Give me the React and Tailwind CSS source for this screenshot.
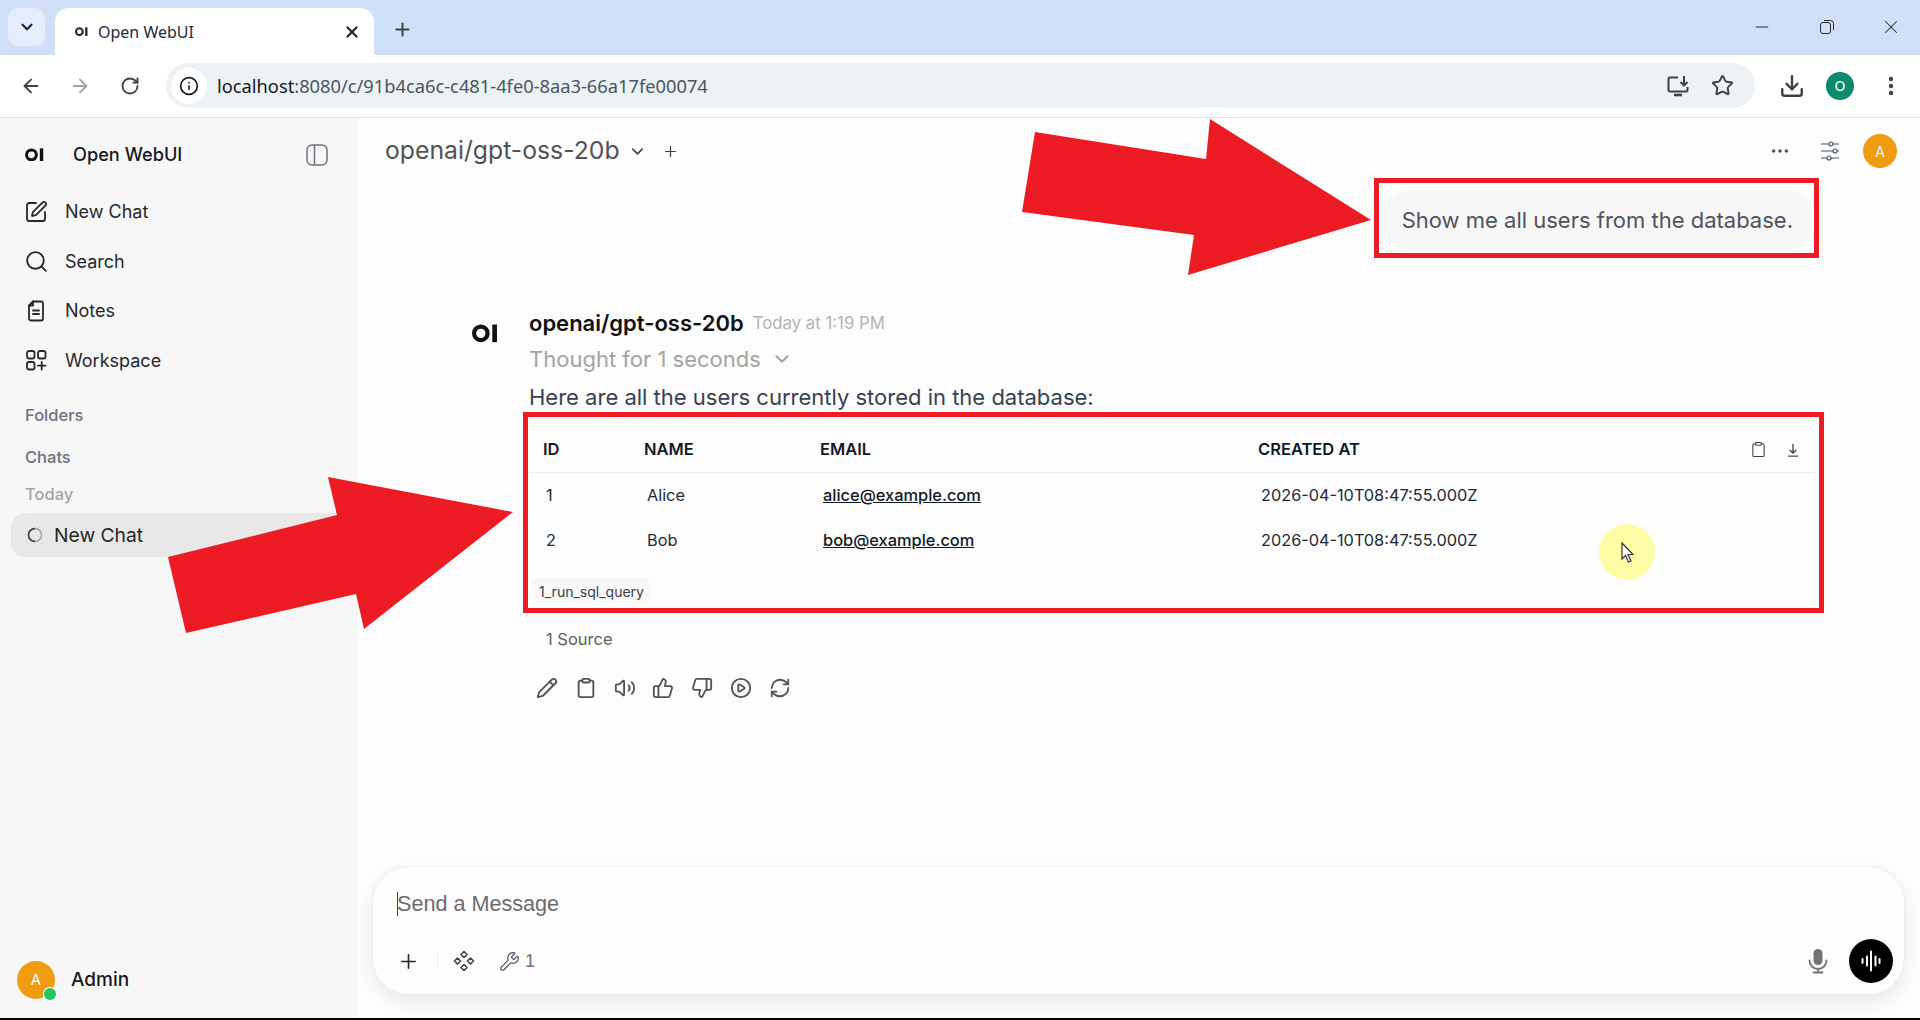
import {
  ArrowLeft,
  ArrowRight,
  RotateCw,
  Info,
  Star,
  Download,
  EllipsisVertical,
  Ellipsis,
  X,
  Plus,
  ChevronDown,
  Minus,
  SquarePen,
  Search,
  Pencil,
  Clipboard,
  Volume2,
  ThumbsUp,
  ThumbsDown,
  CirclePlay,
  RefreshCw,
  Wrench,
} from "lucide-react";

// logo: ring + bar
const Logo = ({ size = 18, className = "" }) => (
  <svg width={size} height={size * 0.72} viewBox="0 0 25 18" className={className}>
    <circle cx="8.5" cy="9" r="6.5" fill="none" stroke="currentColor" strokeWidth="4" />
    <rect x="19.5" y="0.5" width="4.5" height="17" fill="currentColor" />
  </svg>
);

const PanelIcon = () => (
  <svg width="24" height="24" viewBox="0 0 24 24" fill="none" stroke="#6b7280" strokeWidth="1.5">
    <rect x="2" y="2" width="20" height="20" rx="5" />
    <path d="M9.5 2v20" />
  </svg>
);

const NotesIcon = () => (
  <svg width="24" height="24" viewBox="0 0 24 24" fill="none" stroke="#27272a" strokeWidth="1.8" strokeLinejoin="round" strokeLinecap="round">
    <path d="M9 2.5h8a2 2 0 0 1 2 2v15a2 2 0 0 1-2 2H7a2 2 0 0 1-2-2V6.5z" />
    <path d="M9 2.5v4H5M9 11.5h6M9 15h6" />
  </svg>
);

const WorkspaceIcon = () => (
  <svg width="24" height="24" viewBox="0 0 24 24" fill="none" stroke="#27272a" strokeWidth="1.8" strokeLinecap="round">
    <rect x="3" y="3" width="7.5" height="7.5" rx="2" />
    <rect x="14" y="3" width="7.5" height="7.5" rx="2" />
    <rect x="3" y="14" width="7.5" height="7.5" rx="2" />
    <path d="M17.7 14v7.5M14 17.7h7.5" />
  </svg>
);

const Sliders = () => (
  <svg width="24" height="24" viewBox="0 0 24 24" fill="none" stroke="#4b5563" strokeWidth="1.2">
    <path d="M3 5h8M15 5h6M3 12h12M19 12h2M3 19h6M13 19h8" />
    <circle cx="13" cy="5" r="2" />
    <circle cx="17" cy="12" r="2" />
    <circle cx="11" cy="19" r="2" />
  </svg>
);

const Diamonds = () => (
  <svg width="24" height="24" viewBox="0 0 24 24" fill="none" stroke="#3f3f46" strokeWidth="1.6" strokeLinejoin="round">
    <path d="M12 2.5l3 3-3 3-3-3zM5.5 9l3 3-3 3-3-3zM18.5 9l3 3-3 3-3-3zM12 15.5l3 3-3 3-3-3z" />
  </svg>
);

const MicIcon = () => (
  <svg width="22" height="26" viewBox="0 0 22 26" fill="none">
    <rect x="6.5" y="1" width="9" height="16" rx="4.5" fill="#737373" />
    <path d="M2.5 12.5a8.5 8.5 0 0 0 17 0M11 21v3.5M6.5 24.5h9" stroke="#737373" strokeWidth="1.8" strokeLinecap="round" />
  </svg>
);

const Waves = () => (
  <svg width="24" height="24" viewBox="0 0 24 24" stroke="#fff" strokeLinecap="round" strokeWidth="2">
    <path d="M3.5 10v4M8 7.5v9M12 2.5v19M16.5 7.5v9" />
    <path d="M20.5 10v4" />
  </svg>
);

const ScreenDownload = () => (
  <svg width="24" height="24" viewBox="0 0 24 24" fill="none" stroke="#3f3f46" strokeWidth="2">
    <path d="M12 3.5H4a1.5 1.5 0 0 0-1.5 1.5v11A1.5 1.5 0 0 0 4 17.5h16a1.5 1.5 0 0 0 1.5-1.5v-3" />
    <path d="M8 21h8" strokeWidth="2.6" />
    <path d="M18 2v9M14.5 8l3.5 3.5L21.5 8" />
  </svg>
);

const RestoreIcon = () => (
  <svg width="16" height="16" viewBox="0 0 16 16" fill="none" stroke="#27272a" strokeWidth="1">
    <rect x="1.5" y="3.5" width="10" height="11" rx="2.5" />
    <path d="M5 1.5h6.5a3 3 0 0 1 3 3V11" />
  </svg>
);

const TableDownload = () => (
  <svg width="16" height="16" viewBox="0 0 16 16" fill="none" stroke="#3f3f46" strokeWidth="1.3">
    <path d="M8 2v9M4.8 8L8 11.2 11.2 8" />
    <path d="M3 14.2h10" stroke="#71717a" strokeWidth="1.6" />
  </svg>
);

const navItems = [
  { label: "New Chat", icon: <SquarePen size={24} strokeWidth={1.8} color="#27272a" /> },
  { label: "Search", icon: <Search size={25} strokeWidth={1.8} color="#27272a" /> },
  { label: "Notes", icon: <NotesIcon /> },
  { label: "Workspace", icon: <WorkspaceIcon /> },
];

const users = [
  { id: "1", name: "Alice", email: "alice@example.com", created: "2026-04-10T08:47:55.000Z" },
  { id: "2", name: "Bob", email: "bob@example.com", created: "2026-04-10T08:47:55.000Z" },
];

const actions = [Pencil, Clipboard, Volume2, ThumbsUp, ThumbsDown, CirclePlay, RefreshCw];

const ChromeBar = () => (
  <div className="font-['Noto_Sans',sans-serif] text-[#1f2937]">
    <div className="flex h-[55px] items-end bg-[#d0e0f8] pl-[8px]">
      <div className="mb-[9px] flex h-[38px] w-[37px] items-center justify-center rounded-[10px] bg-[#e3edfb]">
        <ChevronDown size={18} strokeWidth={3} color="#1f2937" />
      </div>
      <div className="ml-[10px] flex h-[47px] w-[319px] items-center rounded-t-[14px] bg-white pl-[20px] pr-[13px]">
        <Logo size={13} className="text-[#1f2937]" />
        <span className="ml-[10px] flex-1 text-[16px]">Open WebUI</span>
        <X size={18} strokeWidth={3} color="#1f2937" />
      </div>
      <div className="mb-[15px] ml-[18px]">
        <Plus size={21} strokeWidth={2.2} color="#3f3f46" />
      </div>
      <div className="mb-[17px] ml-auto flex items-center">
        <Minus size={20} strokeWidth={1.2} color="#27272a" />
        <div className="ml-[47px]">
          <RestoreIcon />
        </div>
        <div className="ml-[45px] mr-[18px]">
          <X size={22} strokeWidth={1.1} color="#27272a" />
        </div>
      </div>
    </div>
    <div className="flex h-[63px] items-center border-b border-[#e2e2e2] bg-white pb-[1px]">
      <div className="flex w-[166px] items-center pl-[20px]">
        <ArrowLeft size={22} strokeWidth={2} color="#3f3f46" />
        <ArrowRight size={22} strokeWidth={2} color="#a1a1aa" className="ml-[27px]" />
        <RotateCw size={20} strokeWidth={2.2} color="#3f3f46" className="ml-[29px]" />
      </div>
      <div className="flex h-[45px] w-[1589px] items-center rounded-full bg-[#edf2f6] pl-[5px] pr-[21px]">
        <div className="flex h-[36px] w-[36px] items-center justify-center rounded-full bg-white">
          <Info size={20} strokeWidth={2} color="#18181b" />
        </div>
        <span className="ml-[10px] flex-1 text-[18.3px] text-[#4b5563]">
          <span className="text-[#111827]">localhost</span>:8080/c/91b4ca6c-c481-4fe0-8aa3-66a17fe00074
        </span>
        <ScreenDownload />
        <Star size={23} strokeWidth={2} color="#3f3f46" className="ml-[21px]" />
      </div>
      <Download size={26} strokeWidth={2.2} color="#3f3f46" className="ml-[24px]" />
      <div className="ml-[21px] flex h-[28px] w-[28px] items-center justify-center rounded-full bg-[#0b8a70] text-[14px] text-white">
        O
      </div>
      <EllipsisVertical size={24} strokeWidth={2.4} color="#3f3f46" className="ml-[25px]" />
    </div>
  </div>
);

const Sidebar = () => (
  <aside className="flex w-[358px] shrink-0 flex-col bg-[#f7f7f7]">
    <div className="flex h-[69px] items-center pl-[25px] pr-[29px] pt-[4px]">
      <Logo size={19} className="text-[#111]" />
      <span className="ml-[29px] flex-1 text-[18.2px] font-medium text-[#18181b]">Open WebUI</span>
      <PanelIcon />
    </div>
    <nav>
      {navItems.map((item) => (
        <div key={item.label} className="flex h-[49.5px] items-center pl-[24px] text-[18px] text-[#27272a]">
          <span className="flex w-[41px] items-center">{item.icon}</span>
          {item.label}
        </div>
      ))}
    </nav>
    <div className="mt-[13px] flex h-[34px] items-center pl-[25px] text-[16.5px] font-medium text-[#6b7280]">Folders</div>
    <div className="mt-[8px] flex h-[34px] items-center pl-[25px] text-[16.5px] font-medium text-[#6b7280]">Chats</div>
    <div className="mt-[7px] flex h-[26px] items-center pl-[25px] text-[16.5px] font-medium text-[#a3a3a3]">Today</div>
    <div className="ml-[11px] mt-[6px] flex h-[44px] items-center rounded-l-[14px] rounded-r-none bg-[#e8e8e8] pl-[16px] text-[19.25px] text-[#27272a]">
      <svg width="16" height="16" viewBox="0 0 16 16" fill="none" className="mr-[11px]">
        <circle cx="8" cy="8" r="6.5" stroke="#a3a3a3" strokeWidth="1.6" />
        <path d="M8 1.5a6.5 6.5 0 0 0 0 13" stroke="#3f3f46" strokeWidth="1.6" />
      </svg>
      New Chat
    </div>
    <div className="mt-auto flex items-center pb-[19px] pl-[17px]">
      <div className="relative flex h-[38px] w-[38px] items-center justify-center rounded-full bg-[#f09c13] text-[15px] text-white">
        A
        <span className="absolute -bottom-[1px] -right-[1px] h-[12px] w-[12px] rounded-full bg-[#22c55e] ring-1 ring-white" />
      </div>
      <span className="ml-[16px] text-[19px] font-medium text-[#18181b]">Admin</span>
    </div>
  </aside>
);

const UsersTable = () => (
  <div className="mt-[11px] w-[1287px]">
    <div className="grid h-[50px] grid-cols-[115px_176px_438px_1fr] items-center border-b border-[#ececec] pt-[4px] text-[16.5px] font-semibold text-[#111827]">
      <span className="pl-[14px]">ID</span>
      <span>NAME</span>
      <span>EMAIL</span>
      <div className="flex items-center justify-between pr-[15px]">
        <span>CREATED AT</span>
        <div className="flex items-center gap-[18px]">
          <Clipboard size={17} strokeWidth={1.5} color="#3f3f46" />
          <TableDownload />
        </div>
      </div>
    </div>
    {users.map((u) => (
      <div key={u.id} className="grid h-[45px] grid-cols-[115px_176px_438px_1fr] items-center text-[16.3px] text-[#1f2937]">
        <span className="pl-[17px]">{u.id}</span>
        <span className="pl-[3px]">{u.name}</span>
        <span className="pl-[3px] text-[16.4px] font-medium text-[#111827] underline">{u.email}</span>
        <span className="pl-[3px]">{u.created}</span>
      </div>
    ))}
    <div className="ml-[3px] mt-[15px] flex h-[26px] w-[119px] items-center justify-center rounded-[8px] bg-[#f8f8f8] text-[14px] text-[#374151]">
      1_run_sql_query
    </div>
  </div>
);

const ChatInput = () => (
  <div className="mb-[23px] ml-[14px] mr-[15px] h-[129px] rounded-[36px] border border-[#eeeeee] bg-[#fdfdfd] pt-[22px] shadow-[0_8px_20px_rgba(0,0,0,0.08)]">
    <div className="flex h-[30px] items-center pl-[24px] font-['Liberation_Sans',sans-serif] text-[21.6px] text-[#6b6b6b]">
      <span className="mr-[-1px] h-[24px] w-[1px] bg-[#374151]" />
      Send a Message
    </div>
    <div className="mt-[20px] flex h-[44px] items-center pl-[24px] pr-[11px]">
      <Plus size={23} strokeWidth={1.7} color="#27272a" />
      <span className="ml-[17px] h-[18px] w-[1px] bg-[#ececec]" />
      <div className="ml-[14px]">
        <Diamonds />
      </div>
      <Wrench size={21} strokeWidth={1.4} color="#4b5563" className="ml-[23px]" />
      <span className="ml-[5px] font-['Liberation_Sans',sans-serif] text-[18px] text-[#6b7280]">1</span>
      <div className="ml-auto flex items-center">
        <MicIcon />
        <div className="ml-[20px] flex h-[44px] w-[44px] items-center justify-center rounded-full bg-black">
          <Waves />
        </div>
      </div>
    </div>
  </div>
);

const Main = () => (
  <main className="flex min-w-0 flex-1 flex-col bg-[#fdfdfd]">
    <header className="flex h-[66px] items-center pl-[27px] pr-[23px]">
      <span className="text-[24.75px] text-[#525252]">openai/gpt-oss-20b</span>
      <ChevronDown size={19} strokeWidth={2} color="#404040" className="ml-[8px]" />
      <Plus size={17} strokeWidth={1.7} color="#404040" className="ml-[15px]" />
      <Ellipsis size={22} strokeWidth={2} color="#4b5563" className="ml-auto" />
      <div className="ml-[27px]">
        <Sliders />
      </div>
      <div className="ml-[21px] flex h-[34px] w-[34px] items-center justify-center rounded-full bg-[#f09c13] text-[14px] text-white">
        A
      </div>
    </header>

    <div className="flex-1">
      <div className="mr-[109px] mt-[7px] flex justify-end">
        <div className="flex h-[58px] items-center rounded-[22px] bg-[#f7f7f7] px-[18px] text-[22px] text-[#52525b]">
          Show me all users from the database.
        </div>
      </div>

      <div className="mt-[59px] flex pl-[114px]">
        <div className="w-[57px] pt-[16px] text-[#111]">
          <Logo size={26} />
        </div>
        <div>
          <div className="flex h-[30px] items-center">
            <span className="text-[22px] font-semibold text-[#111]">openai/gpt-oss-20b</span>
            <span className="ml-[9px] pt-[2px] text-[16.8px] text-[#b4b4b4]">Today at 1:19 PM</span>
          </div>
          <div className="mt-[6px] flex h-[30px] items-center text-[22px] text-[#a3a3a3]">
            Thought for 1 seconds
            <ChevronDown size={22} strokeWidth={2.2} color="#9ca3af" className="ml-[10px]" />
          </div>
          <div className="mt-[8px] flex h-[30px] items-center text-[22px] text-[#374151]">
            Here are all the users currently stored in the database:
          </div>
          <UsersTable />
          <div className="ml-[17px] mt-[23px] flex h-[24px] items-center text-[16.5px] text-[#5f5f5f]">1 Source</div>
          <div className="ml-[7px] mt-[24px] flex h-[26px] items-center gap-[16.8px]">
            {actions.map((Icon, i) => (
              <Icon key={i} size={22} strokeWidth={2} color="#52525b" />
            ))}
          </div>
        </div>
      </div>
    </div>

    <ChatInput />
  </main>
);

// red callouts and the pointer halo lie over the page
const Annotations = () => (
  <>
    <div className="absolute left-[1374px] top-[178px] h-[80px] w-[445px] border-[5px] border-[#ed1c24]" />
    <div className="absolute left-[523px] top-[412px] h-[201px] w-[1301px] border-[5px] border-[#ed1c24]" />
    <div className="absolute left-[1599px] top-[524px] h-[56px] w-[56px] rounded-full bg-[#fdfda6]" />
    <svg className="absolute left-0 top-0" width="1920" height="1020" viewBox="0 0 1920 1020">
      <polygon points="1035,132 1206,159 1210,119 1371,220 1188,275 1194,235 1022,212" fill="#ed1c24" />
      <polygon points="328,477 513,512 364,629 356,594 186,633 168,557 337,515" fill="#ed1c24" />
      <path d="M1622 543l0 16 3.500-3.500 3 6.500 2.500-1-3-6.500 5 0z" fill="#fff" stroke="#333" strokeWidth="1.2" />
    </svg>
  </>
);

export default function App() {
  return (
    <div className="relative flex h-[1020px] w-[1920px] flex-col overflow-hidden bg-white font-['Inter',sans-serif]">
      <ChromeBar />
      <div className="flex min-h-0 flex-1">
        <Sidebar />
        <Main />
      </div>
      <div className="h-[2px] bg-black" />
      <Annotations />
    </div>
  );
}
